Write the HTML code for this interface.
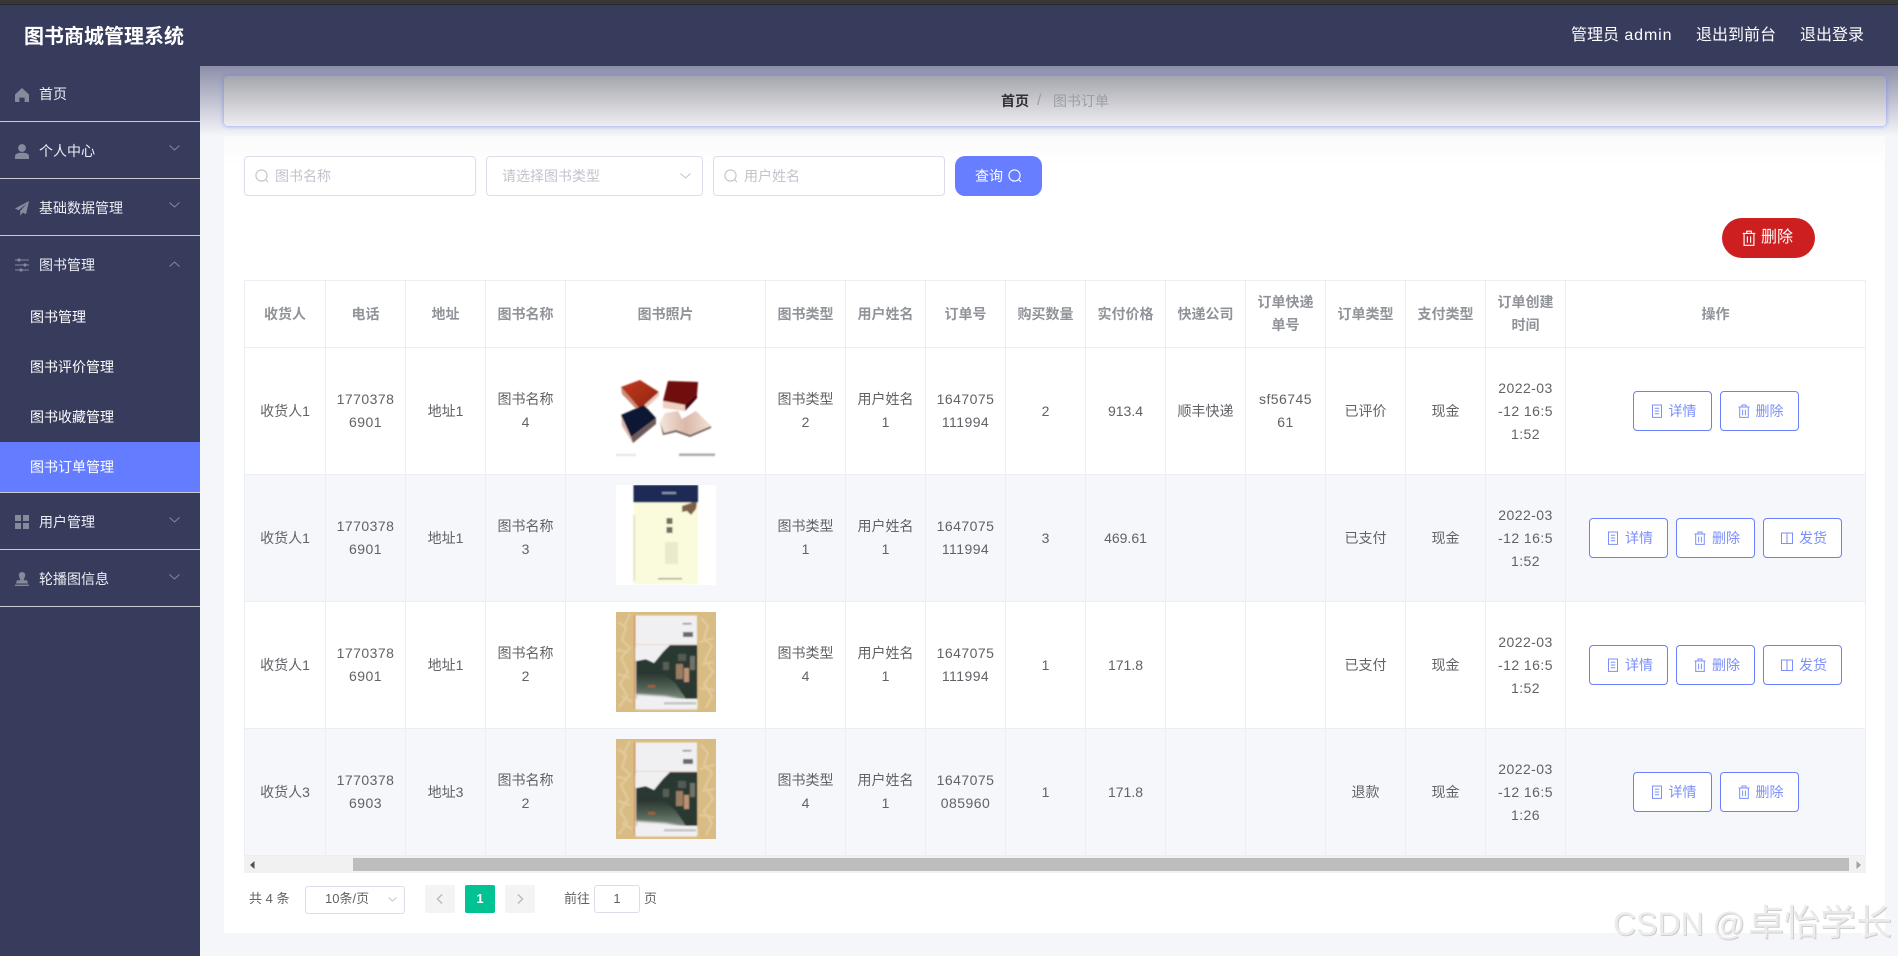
<!DOCTYPE html>
<html lang="zh">
<head>
<meta charset="utf-8">
<title>图书商城管理系统</title>
<style>
*{box-sizing:border-box;margin:0;padding:0}
html,body{width:1898px;height:956px;overflow:hidden;background:#f5f6fa;font-family:"Liberation Sans","Noto Sans CJK SC",sans-serif;font-size:14px;color:#606266}
.a{position:absolute}
.t{position:absolute;white-space:nowrap;line-height:20px}
#top{left:0;top:0;width:1898px;height:5px;background:#383838;border-bottom:1px solid #2a2a2a}
#hd{left:0;top:5px;width:1898px;height:61px;background:#373b5c}
#side{left:0;top:66px;width:200px;height:890px;background:#373b5c}
.ln{position:absolute;left:0;width:200px;height:1px;background:#c9cad2}
.m{color:#eceef4}
.sub{color:#fff}
#shade{left:200px;top:66px;width:1698px;height:70px;background:linear-gradient(#8c8ea8,#f5f6fa)}
#bc{left:224px;top:76px;width:1662px;height:50px;border-radius:4px;background:linear-gradient(#a5a5ae,#eeeef1);box-shadow:0 0 5px rgba(100,124,255,.7)}
#panel{left:224px;top:136px;width:1661px;height:797px;background:linear-gradient(#fafafb,#fff 30px)}
.inp{position:absolute;top:156px;height:40px;background:#fff;border:1px solid #dcdde8;border-radius:4px}
.ph{color:#c0c4cc}
#q{left:955px;top:156px;width:87px;height:40px;background:#667eff;border-radius:10px}
#del{left:1722px;top:218px;width:93px;height:40px;background:#cd1f1f;border-radius:20px}
#tb{left:244px;top:280px;border-left:1px solid #ebeef5;border-top:1px solid #ebeef5;width:1622px}
table{border-collapse:separate;border-spacing:0;table-layout:fixed;width:1621px}
th,td{border-right:1px solid #ebeef5;border-bottom:1px solid #ebeef5;text-align:center;vertical-align:middle;line-height:23px;font-size:14px;white-space:nowrap;padding:0;font-weight:400}
th{height:67px;color:#909399;font-weight:700}
td{height:127px;color:#606266}
td.n{letter-spacing:.45px}
tr.e td{background:#f5f7fb}
td svg.im{display:block;margin:auto;width:100px;height:100px;position:relative;top:-3px}
.ops{display:flex;justify-content:center;gap:8px}
.b{width:79px;height:40px;background:#fff;border:1px solid #6b80fa;border-radius:4px;color:#7c8ffb;display:flex;align-items:center;padding-left:17px;line-height:20px}
.b svg{width:12px;height:14px;margin-right:6px;flex:none}
#sb{left:244px;top:856px;width:1622px;height:17px;background:#f1f1f1}
#th{left:353px;top:858px;width:1496px;height:13px;background:#bdbdbd}
.pg{position:absolute;top:885px;width:30px;height:28px;background:#f4f4f5;border-radius:2px;text-align:center;line-height:28px;font-size:13px}
#wm{left:1613px;top:902px;font-size:32px;line-height:42px;color:#ebebeb;white-space:nowrap;text-shadow:1px 1px 0 #cdcdcd,-1px -1px 0 #fff}
#wm span{font-size:36px;margin-left:3px}
</style>
</head>
<body>
<svg width="0" height="0" style="position:absolute">
<defs>
<filter id="bl" x="-5%" y="-5%" width="110%" height="110%"><feGaussianBlur stdDeviation=".8"/></filter>
<filter id="bl2" x="-5%" y="-5%" width="110%" height="110%"><feGaussianBlur stdDeviation="1.4"/></filter>
<linearGradient id="rd" x1="0" y1="0" x2="1" y2="1"><stop offset="0" stop-color="#c23a1e"/><stop offset="1" stop-color="#8e2410"/></linearGradient>
<linearGradient id="wt" x1="0" y1="0" x2="0" y2="1"><stop offset="0" stop-color="#27322c"/><stop offset=".55" stop-color="#4e5e52"/><stop offset="1" stop-color="#7c8a7c"/></linearGradient>
<linearGradient id="pg" x1="0" y1="0" x2="1" y2="0"><stop offset="0" stop-color="#f5e6dc"/><stop offset=".5" stop-color="#d9b8a8"/><stop offset="1" stop-color="#f3e0d6"/></linearGradient>
<symbol id="se" viewBox="0 0 14 14"><circle cx="6.5" cy="6.5" r="5.6" fill="none" stroke="currentColor" stroke-width="1.1"/><path d="M10.6 10.6L13 13" fill="none" stroke="currentColor" stroke-width="1.1"/></symbol>
<symbol id="tr" viewBox="0 0 12 14"><path d="M.5 3h11M4 3V1h4v2M1.7 3v10.4h8.600V3M4.600 5.600v5.600M7.400 5.600v5.600" fill="none" stroke="currentColor" stroke-width="1"/></symbol>
<symbol id="dc" viewBox="0 0 12 14"><path d="M1.500 1h9v12.400h-9zM3.800 4.200h4.400M3.800 7h4.400M3.800 9.800h4.400" fill="none" stroke="currentColor" stroke-width="1"/></symbol>
<symbol id="bk" viewBox="0 0 12 14"><path d="M.5 2h11v10.500H.5zM6 2v10.500" fill="none" stroke="currentColor" stroke-width="1"/></symbol>
<symbol id="p1" viewBox="0 0 100 100">
<rect width="100" height="100" fill="#fff"/>
<g filter="url(#bl)">
<polygon points="5,29 24,22 43,34 24,51" fill="url(#rd)"/>
<polygon points="5,29 24,51 24,55 6,36" fill="#c98a74"/>
<polygon points="24,51 43,34 43,38 25,55" fill="#e8c9b8"/>
<polygon points="52,23 82,24 81,36 69,47 47,43" fill="#6f0a0f"/>
<polygon points="47,43 69,47 69,53 47,50" fill="#f0cfc0"/>
<polygon points="69,47 81,36 81,40 69,53" fill="#4a0608"/>
<polygon points="5,57 28,47 40,60 15,79" fill="#0c1230"/>
<polygon points="5,57 15,79 17,85 6,68" fill="#d9b3a8"/>
<polygon points="15,79 40,60 40,66 17,85" fill="#6d5a5a"/>
<polygon points="44,64 49,55 62,53 66,61 80,53 95,68 74,77 60,72 48,75" fill="url(#pg)"/>
<polygon points="44,64 48,75 60,72 74,77 95,68 95,70 74,79 60,74 47,77" fill="#6a5a55"/>
<rect x="0" y="96" width="20" height="2" fill="#e4e4e4"/>
<rect x="63" y="95.500" width="36" height="2.500" fill="#aaa"/>
</g>
</symbol>
<symbol id="p2" viewBox="0 0 100 100">
<rect width="100" height="100" fill="#fff"/>
<g filter="url(#bl)">
<rect x="17.500" y="0" width="64.500" height="99" fill="#fafbdc"/>
<rect x="17.500" y="0" width="64.500" height="17.500" fill="#1d2b55"/>
<rect x="46" y="7" width="14" height="2" fill="#8d94ad"/>
<polygon points="66,21 72,19 78,17 81,18 80,24 75,30 71,26 66,27" fill="#7d6048"/>
<rect x="50.500" y="33" width="6" height="6" fill="#70705f"/>
<rect x="50.500" y="42" width="6" height="6" fill="#70705f"/>
<rect x="49" y="57" width="13" height="22" fill="#e9eacc"/>
<rect x="42" y="93" width="24" height="1.500" fill="#a3a58c"/>
<rect x="17.500" y="30" width="1.500" height="66" fill="#dcddbc"/>
</g>
</symbol>
<symbol id="p3" viewBox="0 0 100 100">
<rect width="100" height="100" fill="#d9bc84"/>
<g filter="url(#bl)" fill="none" stroke="#e6d3aa" stroke-width="2.200" opacity=".65">
<path d="M2 10L10 16 6 28 14 36 5 46 12 60 4 72 11 84 3 95"/>
<path d="M14 2L8 14M1 38L12 40M2 62L14 66M6 84L16 90"/>
<path d="M85 6L92 14 88 26 96 34 89 48 97 60 88 72 96 84 90 96"/>
<path d="M84 30L98 26M86 52L98 50M84 76L98 78"/>
</g>
<g filter="url(#bl)">
<rect x="18" y="3.500" width="2" height="93" fill="#d48e55"/>
<rect x="19.500" y="3.500" width="61.500" height="93.500" fill="#f0f0f2"/>
<rect x="19.500" y="32" width="61.500" height="1" fill="#ecd4cc"/>
<rect x="66.500" y="11" width="9" height="1.500" fill="#888"/>
<rect x="67" y="20" width="10" height="5" fill="#6b6b6b"/>
<polygon points="20,49 30,47 38,51 47,40 54,33 81,33 81,87 20,87" fill="#2c3731"/>
<polygon points="20,60 46,60 60,72 70,87 20,87" fill="url(#wt)"/>
<rect x="60" y="52" width="7" height="15" fill="#9a7c60"/>
<rect x="68" y="56" width="5" height="14" fill="#bb9274"/>
<rect x="62" y="42" width="8" height="7" fill="#545a52"/>
<rect x="74" y="44" width="5" height="14" fill="#6f7268"/>
<rect x="47" y="50" width="6" height="8" fill="#5a5f55"/>
<rect x="32" y="73" width="7" height="2.500" fill="#a4603a"/>
</g>
<g filter="url(#bl2)">
<polygon points="20,82 50,84 70,88 81,88 81,97 20,97" fill="#f0f0f2"/>
<polygon points="20,36 44,36 36,48 28,46 20,48" fill="#f0f0f2"/>
</g>
<rect x="48" y="90" width="32" height="2.500" fill="#c4c4c4" filter="url(#bl)"/>
</symbol>
</defs>
</svg>

<div class="a" id="top"></div>
<div class="a" id="hd"></div>
<div class="t" style="left:24px;top:25px;font-size:20px;font-weight:700;color:#fff;line-height:24px">图书商城管理系统</div>
<div class="t" style="left:1571px;top:26px;font-size:16px;color:#fff">管理员<span style="letter-spacing:.9px"> admin</span></div>
<div class="t" style="left:1696px;top:26px;font-size:16px;color:#fff">退出到前台</div>
<div class="t" style="left:1800px;top:26px;font-size:16px;color:#fff">退出登录</div>

<div class="a" id="side"></div>
<div class="ln" style="top:121px"></div>
<div class="ln" style="top:178px"></div>
<div class="ln" style="top:235px"></div>
<div class="a" style="left:0;top:442px;width:200px;height:50px;background:#647cff"></div>
<div class="ln" style="top:492px"></div>
<div class="ln" style="top:549px"></div>
<div class="ln" style="top:606px"></div>

<svg class="a" style="left:15px;top:88px" width="14" height="14" viewBox="0 0 14 14"><path d="M7 0L14 6.500V14H9.600V9.600H4.400V14H0V6.500z" fill="#858a9c"/></svg>
<svg class="a" style="left:15px;top:144px" width="14" height="15" viewBox="0 0 14 15"><circle cx="7" cy="4" r="3.900" fill="#858a9c"/><path d="M0 15v-2.600C0 10 2.500 8.800 7 8.800s7 1.200 7 3.600V15z" fill="#858a9c"/></svg>
<svg class="a" style="left:15px;top:201px" width="14" height="15" viewBox="0 0 14 15"><path d="M14 0L0 7.500l3.600 1.700L12 2.500 5.200 10v4.800l2.600-3.200 3.200 1.600z" fill="#858a9c"/></svg>
<svg class="a" style="left:15px;top:258px" width="14" height="14" viewBox="0 0 14 14"><path d="M0 2h14M0 7h14M0 12h14" stroke="#858a9c" stroke-width="1"/><circle cx="4" cy="2" r="1.600" fill="#858a9c"/><circle cx="10" cy="7" r="1.600" fill="#858a9c"/><circle cx="6" cy="12" r="1.600" fill="#858a9c"/></svg>
<svg class="a" style="left:15px;top:515px" width="14" height="14" viewBox="0 0 14 14"><path d="M0 0h6v6H0zM8 0h6v6H8zM0 8h6v6H0zM8 8h6v6H8z" fill="#858a9c"/></svg>
<svg class="a" style="left:15px;top:572px" width="14" height="14" viewBox="0 0 14 14"><path d="M7 0a3.200 3.200 0 0 1 3 4.400L8.600 8.200h3.400L13 11.500H1L2 8.200h3.400L4 4.400A3.200 3.200 0 0 1 7 0zM0 12.600h14V14H0z" fill="#858a9c"/></svg>

<div class="t m" style="left:39px;top:84px">首页</div>
<div class="t m" style="left:39px;top:141px">个人中心</div>
<div class="t m" style="left:39px;top:198px">基础数据管理</div>
<div class="t m" style="left:39px;top:255px">图书管理</div>
<div class="t sub" style="left:30px;top:307px">图书管理</div>
<div class="t sub" style="left:30px;top:357px">图书评价管理</div>
<div class="t sub" style="left:30px;top:407px">图书收藏管理</div>
<div class="t sub" style="left:30px;top:457px">图书订单管理</div>
<div class="t m" style="left:39px;top:512px">用户管理</div>
<div class="t m" style="left:39px;top:569px">轮播图信息</div>

<svg class="a" style="left:169px;top:145px" width="11" height="6"><path d="M.5.5L5.500 5l5-4.500" fill="none" stroke="#858a9c"/></svg>
<svg class="a" style="left:169px;top:202px" width="11" height="6"><path d="M.5.5L5.500 5l5-4.500" fill="none" stroke="#858a9c"/></svg>
<svg class="a" style="left:169px;top:261px" width="11" height="6"><path d="M.5 5.500L5.500 1l5 4.500" fill="none" stroke="#858a9c"/></svg>
<svg class="a" style="left:169px;top:517px" width="11" height="6"><path d="M.5.5L5.500 5l5-4.500" fill="none" stroke="#858a9c"/></svg>
<svg class="a" style="left:169px;top:574px" width="11" height="6"><path d="M.5.5L5.500 5l5-4.500" fill="none" stroke="#858a9c"/></svg>

<div class="a" id="shade"></div>
<div class="a" id="panel"></div>
<div class="a" id="bc"></div>
<div class="t" style="left:1001px;top:91px;font-weight:700;color:#303133">首页</div>
<div class="t" style="left:1037px;top:91px;color:#9da0a8;font-size:16px">/</div>
<div class="t" style="left:1053px;top:91px;color:#9a9ea6">图书订单</div>

<div class="inp" style="left:244px;width:232px"></div>
<svg class="a" style="left:255px;top:169px;color:#c0c4cc" width="14" height="14"><use href="#se"/></svg>
<div class="t ph" style="left:275px;top:166px">图书名称</div>
<div class="inp" style="left:486px;width:217px"></div>
<div class="t ph" style="left:502px;top:166px">请选择图书类型</div>
<svg class="a" style="left:680px;top:173px" width="11" height="6"><path d="M.5.5L5.500 5l5-4.500" fill="none" stroke="#c0c4cc"/></svg>
<div class="inp" style="left:713px;width:232px"></div>
<svg class="a" style="left:724px;top:169px;color:#c0c4cc" width="14" height="14"><use href="#se"/></svg>
<div class="t ph" style="left:744px;top:166px">用户姓名</div>
<div class="a" id="q"></div>
<div class="t" style="left:975px;top:166px;color:#fff">查询</div>
<svg class="a" style="left:1008px;top:169px;color:#fff" width="14" height="14"><use href="#se"/></svg>

<div class="a" id="del"></div>
<svg class="a" style="left:1742px;top:230px;color:#fff" width="14" height="16"><use href="#tr"/></svg>
<div class="t" style="left:1761px;top:228px;color:#fff;font-size:16px">删除</div>

<div class="a" id="tb">
<table>
<colgroup><col style="width:81px"><col style="width:80px"><col style="width:80px"><col style="width:80px"><col style="width:200px"><col style="width:80px"><col style="width:80px"><col style="width:80px"><col style="width:80px"><col style="width:80px"><col style="width:80px"><col style="width:80px"><col style="width:80px"><col style="width:80px"><col style="width:80px"><col style="width:300px"></colgroup>
<tr><th>收货人</th><th>电话</th><th>地址</th><th>图书名称</th><th>图书照片</th><th>图书类型</th><th>用户姓名</th><th>订单号</th><th>购买数量</th><th>实付价格</th><th>快递公司</th><th>订单快递<br>单号</th><th>订单类型</th><th>支付类型</th><th>订单创建<br>时间</th><th>操作</th></tr>
<tr>
<td>收货人1</td><td class="n">1770378<br>6901</td><td>地址1</td><td>图书名称<br>4</td><td><svg class="im"><use href="#p1"/></svg></td><td>图书类型<br>2</td><td>用户姓名<br>1</td><td class="n">1647075<br>111994</td><td>2</td><td>913.4</td><td>顺丰快递</td><td class="n">sf56745<br>61</td><td>已评价</td><td>现金</td><td class="n">2022-03<br>-12 16:5<br>1:52</td>
<td><div class="ops"><div class="b"><svg><use href="#dc"/></svg>详情</div><div class="b"><svg><use href="#tr"/></svg>删除</div></div></td>
</tr>
<tr class="e">
<td>收货人1</td><td class="n">1770378<br>6901</td><td>地址1</td><td>图书名称<br>3</td><td><svg class="im"><use href="#p2"/></svg></td><td>图书类型<br>1</td><td>用户姓名<br>1</td><td class="n">1647075<br>111994</td><td>3</td><td>469.61</td><td></td><td></td><td>已支付</td><td>现金</td><td class="n">2022-03<br>-12 16:5<br>1:52</td>
<td><div class="ops"><div class="b"><svg><use href="#dc"/></svg>详情</div><div class="b"><svg><use href="#tr"/></svg>删除</div><div class="b"><svg><use href="#bk"/></svg>发货</div></div></td>
</tr>
<tr>
<td>收货人1</td><td class="n">1770378<br>6901</td><td>地址1</td><td>图书名称<br>2</td><td><svg class="im"><use href="#p3"/></svg></td><td>图书类型<br>4</td><td>用户姓名<br>1</td><td class="n">1647075<br>111994</td><td>1</td><td>171.8</td><td></td><td></td><td>已支付</td><td>现金</td><td class="n">2022-03<br>-12 16:5<br>1:52</td>
<td><div class="ops"><div class="b"><svg><use href="#dc"/></svg>详情</div><div class="b"><svg><use href="#tr"/></svg>删除</div><div class="b"><svg><use href="#bk"/></svg>发货</div></div></td>
</tr>
<tr class="e">
<td>收货人3</td><td class="n">1770378<br>6903</td><td>地址3</td><td>图书名称<br>2</td><td><svg class="im"><use href="#p3"/></svg></td><td>图书类型<br>4</td><td>用户姓名<br>1</td><td class="n">1647075<br>085960</td><td>1</td><td>171.8</td><td></td><td></td><td>退款</td><td>现金</td><td class="n">2022-03<br>-12 16:5<br>1:26</td>
<td><div class="ops"><div class="b"><svg><use href="#dc"/></svg>详情</div><div class="b"><svg><use href="#tr"/></svg>删除</div></div></td>
</tr>
</table>
</div>

<div class="a" id="sb"></div>
<div class="a" id="th"></div>
<svg class="a" style="left:250px;top:861px" width="5" height="8"><path d="M4.500 0v8L0 4z" fill="#505050"/></svg>
<svg class="a" style="left:1856px;top:861px" width="5" height="8"><path d="M.5 0v8L5 4z" fill="#a0a0a0"/></svg>

<div class="t" style="left:249px;top:889px;font-size:13px">共 4 条</div>
<div class="a" style="left:305px;top:886px;width:100px;height:28px;background:#fff;border:1px solid #dcdde8;border-radius:3px"></div>
<div class="t" style="left:325px;top:889px;font-size:13px">10条/页</div>
<svg class="a" style="left:388px;top:897px" width="9" height="5"><path d="M.5.5L4.500 4l4-3.500" fill="none" stroke="#c0c4cc"/></svg>
<div class="pg" style="left:425px"></div>
<svg class="a" style="left:436px;top:894px" width="7" height="10"><path d="M6 .5L1.500 5 6 9.500" fill="none" stroke="#b8bcc4" stroke-width="1.500"/></svg>
<div class="pg" style="left:465px;background:#00c292;color:#fff;font-weight:700">1</div>
<div class="pg" style="left:505px"></div>
<svg class="a" style="left:517px;top:894px" width="7" height="10"><path d="M1 .5L5.500 5 1 9.500" fill="none" stroke="#b8bcc4" stroke-width="1.500"/></svg>
<div class="t" style="left:564px;top:889px;font-size:13px">前往</div>
<div class="a" style="left:594px;top:885px;width:46px;height:28px;background:#fff;border:1px solid #dcdde8;border-radius:3px;text-align:center;line-height:26px;font-size:13px">1</div>
<div class="t" style="left:644px;top:889px;font-size:13px">页</div>

<div class="a" id="wm">CSDN @<span>卓怡学长</span></div>
</body>
</html>
